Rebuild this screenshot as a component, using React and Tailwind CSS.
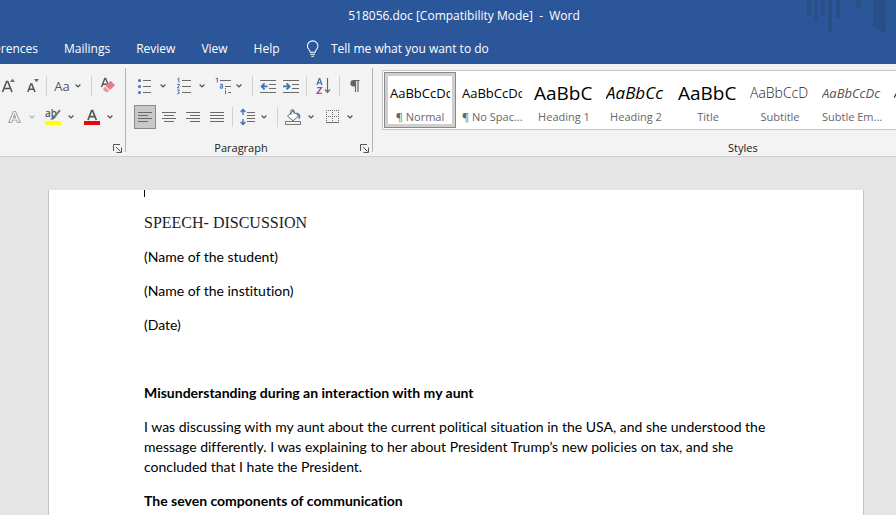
import React from "react";

const line = { stroke: "#6a6a6a", strokeWidth: 1, fill: "none", shapeRendering: "crispEdges" };
const blue = "#3f74ae";

function Icon({ w = 16, label, children }) {
  return (
    <svg width={w} height="20" viewBox={`0 0 ${w} 20`} role="img" aria-label={label} className="shrink-0">
      {children}
    </svg>
  );
}

function Chevron({ faded }) {
  return (
    <svg width="6" height="6" viewBox="0 0 6 6" className="shrink-0" aria-hidden="true">
      <path d="M0.6 1.5 3 3.9 5.4 1.5" fill="none" stroke={faded ? "#b5b5b5" : "#555"} strokeWidth="1.3" />
    </svg>
  );
}

function Tool({ children }) {
  return <button className="flex h-6 shrink-0 items-center">{children}</button>;
}

function DropTool({ children, tight, faded }) {
  return (
    <button className={`flex h-6 shrink-0 items-center ${tight ? "gap-[5px]" : "gap-[7px]"}`}>
      {children}
      <Chevron faded={faded} />
    </button>
  );
}

const Sep = () => <span className="h-5 w-px shrink-0 bg-[#d0d0d0]" />;

const rows = (list) => list.map(([x1, x2, y]) => <path key={y} d={`M${x1} ${y}.5H${x2}`} {...line} />);

function AlignTool({ label, lines, active }) {
  return (
    <button
      aria-pressed={!!active}
      className={`flex h-6 w-[22px] items-center justify-center border ${active ? "border-[#8a8a8a] bg-[#c8c8c8]" : "border-transparent"}`}
    >
      <Icon w={14} label={label}>{rows(lines)}</Icon>
    </button>
  );
}

function Launcher({ label }) {
  return (
    <button aria-label={label} className="flex h-4 w-4 items-center justify-center">
      <svg width="9" height="9" viewBox="0 0 9 9" aria-hidden="true">
        <path d="M0.5 7V0.5H7M3 3 7.5 7.5M8.5 3.5V8.5M3.5 8.5H8.5" fill="none" stroke="#555" />
      </svg>
    </button>
  );
}

function FontGroup() {
  return (
    <section aria-label="Font" className="flex w-[126px] shrink-0 flex-col border-r border-[#b4b4b4] pt-1.5">
      <div className="flex h-6 items-center">
        <Tool>
          <Icon w={18} label="Increase font size">
            <path d="M2.5 16 6.6 5.5h1.2L12 16M4 12.5h6.5" fill="none" stroke="#555" strokeWidth="1.6" />
            <path d="M10 6 12.5 2.8 15 6z" fill={blue} />
          </Icon>
        </Tool>
        <Tool>
          <Icon w={28} label="Decrease font size">
            <path d="M9.8 16 12.8 8h1L17 16M11 13.3h5" fill="none" stroke="#555" strokeWidth="1.5" />
            <path d="M16 3h5l-2.5 3.2z" fill={blue} />
          </Icon>
        </Tool>
        <Sep />
        <div className="flex pr-2.5 pl-[7px]">
          <DropTool tight>
            <span className="w-4 text-[13px] leading-5 text-[#555]">Aa</span>
          </DropTool>
        </div>
        <Sep />
        <div className="flex pl-2">
          <Tool>
            <Icon w={16} label="Clear all formatting">
              <path d="M1.5 11 4.8 2.5h.8L8 8M2.7 8.3h4" fill="none" stroke="#555" strokeWidth="1.4" />
              <path d="M10.6 4.8 15 9.2 10 14 5.5 9.8z" fill="#e8788a" />
              <path d="M4.8 10.5 9.2 14.7 7.8 16H5.6L3 13.2z" fill="#ec93a1" />
            </Icon>
          </Tool>
        </div>
      </div>
      <div className="mt-[7px] flex h-6 items-center gap-2.5 pl-1.5">
        <DropTool faded>
          <Icon label="Text effects">
            <path d="M2.8 15.5 7.4 4.5h2.2l4.600 11h-2.800l-.9-2.500H6.500l-.9 2.500zM7.300 10.800h2.400L8.500 7.500z" fill="#fff" stroke="#a9a9a9" strokeWidth="1.200" />
          </Icon>
        </DropTool>
        <DropTool>
          <Icon label="Text highlight color">
            <text x="0" y="10" fontSize="10" fontFamily="Open Sans" fontWeight="600" fill="#555">ab</text>
            <path d="M15 3.2 9.2 10" stroke="#777" strokeWidth="2" />
            <path d="M8.6 8.8 10.6 10.6 8.2 12.6H5z" fill="#666" />
            <path d="M0 14h16v4H0z" fill="#ffff00" />
          </Icon>
        </DropTool>
        <DropTool>
          <Icon label="Font color">
            <path d="M4 13 7.6 3.5h1L12.3 13M5.3 9.6h5.8" fill="none" stroke="#555" strokeWidth="1.7" />
            <path d="M0 14h16v4H0z" fill="#e00b0b" />
          </Icon>
        </DropTool>
      </div>
      <div className="mt-auto flex h-2 items-center justify-end">
        <Launcher label="Font settings" />
      </div>
    </section>
  );
}

function ParagraphGroup() {
  return (
    <section aria-label="Paragraph" className="flex w-[247px] shrink-0 flex-col border-r border-[#b4b4b4] pt-1.5">
      <div className="flex h-6 items-center gap-2.5 pl-[11px]">
        <DropTool>
          <Icon label="Bullets">
            {rows([[6, 14, 4], [6, 14, 10], [6, 14, 16]])}
            {[4, 10, 16].map((y) => <circle key={y} cx="2.5" cy={y + 0.5} r="1.5" fill={blue} />)}
          </Icon>
        </DropTool>
        <DropTool>
          <Icon label="Numbering">
            {rows([[6, 15, 4], [6, 15, 10], [6, 15, 16]])}
            <path d="M1.5 3 2.8 2v4.5M1.2 8.5h2v1.5l-2 1.8h2.3M1.2 14h2.2L2.3 15.7q1.4.2.8 1.6l-2 .6" fill="none" stroke={blue} />
          </Icon>
        </DropTool>
        <DropTool tight>
          <Icon label="Multilevel list">
            {rows([[5, 16, 4], [10, 16, 10], [13, 16, 16]])}
            <path d="M.8 3 2.3 2v4.5M5 8.3h2.5v3.9H5.3v-2h2M10.5 14.3V18M10.5 12v1.2" fill="none" stroke={blue} />
          </Icon>
        </DropTool>
        <div className="flex items-center gap-[7px]">
          <Sep />
          <Tool>
            <Icon label="Decrease indent">
              {rows([[0, 16, 4], [9, 16, 8], [9, 16, 12], [0, 16, 16]])}
              <path d="M7.5 10.4H2M4.6 7.4l-3 3 3 3" fill="none" stroke={blue} strokeWidth="1.8" />
            </Icon>
          </Tool>
          <Tool>
            <Icon label="Increase indent">
              {rows([[0, 16, 4], [9, 16, 8], [9, 16, 12], [0, 16, 16]])}
              <path d="M0 10.4H6M3.6 7.4l3 3-3 3" fill="none" stroke={blue} strokeWidth="1.8" />
            </Icon>
          </Tool>
          <Sep />
          <Tool>
            <Icon w={18} label="Sort">
              <path d="M3 9 5.2 2.6h.6L8 9M3.8 6.8h3.6" fill="none" stroke={blue} strokeWidth="1.3" />
              <path d="M3.2 11.6h4.3L3.2 17.4h4.6" fill="none" stroke="#8a55a8" strokeWidth="1.4" />
              <path d="M13.5 2v14M11 13.5l2.5 2.8 2.5-2.8" fill="none" stroke="#666" strokeWidth="1.2" />
            </Icon>
          </Tool>
          <Sep />
          <Tool>
            <Icon label="Show paragraph marks">
              <path d="M12.500 4.500H6.600M8.500 4.500V16M11 4.500V16" fill="none" stroke="#666" strokeWidth="1.200" />
              <path d="M8.500 4H6.600a3.200 3.200 0 0 0 0 6.500h1.900z" fill="#666" />
            </Icon>
          </Tool>
        </div>
      </div>
      <div className="mt-[7px] flex h-6 items-center gap-2.5 pl-2">
        <div className="flex items-center gap-1">
          <div className="flex gap-0.5">
            <AlignTool label="Align left" active lines={[[0, 14, 5], [0, 10, 8], [0, 14, 11], [0, 10, 14]]} />
            <AlignTool label="Center" lines={[[0, 14, 5], [2, 12, 8], [0, 14, 11], [2, 12, 14]]} />
            <AlignTool label="Align right" lines={[[0, 14, 5], [4, 14, 8], [0, 14, 11], [4, 14, 14]]} />
            <AlignTool label="Justify" lines={[[0, 14, 5], [0, 14, 8], [0, 14, 11], [0, 14, 14]]} />
          </div>
          <div className="flex items-center gap-[7px]">
            <Sep />
            <DropTool tight>
              <Icon label="Line spacing">
                {rows([[7, 15, 5], [7, 15, 8], [7, 15, 11], [7, 15, 14]])}
                <path d="M3 3v5M3 12v5M.6 5 3 2.6 5.4 5M.6 15 3 17.4 5.4 15" fill="none" stroke={blue} strokeWidth="1.4" />
              </Icon>
            </DropTool>
          </div>
        </div>
        <div className="flex items-center gap-[7px]">
          <Sep />
          <DropTool>
            <Icon label="Shading">
              <path d="M8 4 13.5 9 8 13.8 2.5 9z" fill="#fff" stroke="#666" />
              <path d="M6 8V3h3v4" fill="none" stroke="#666" />
              <path d="M11 5.5q5 .5 4.2 5.5l-1.6 1.6V9z" fill={blue} />
              <path d="M.5 14.5h15v3H.5z" fill="#f5f2ee" stroke="#777" />
            </Icon>
          </DropTool>
        </div>
        <DropTool>
          <Icon label="Borders">
            <path d="M2 3.5h13M2 9.5h13M2.5 3v13M8.5 3v13M14.5 3v13" {...line} strokeDasharray="1 1" />
            <path d="M2 15.5h13" {...line} />
          </Icon>
        </DropTool>
      </div>
      <div className="mt-auto flex h-2 items-center">
        <h2 className="flex-1 text-center text-[11px] leading-4 text-[#222]">Paragraph</h2>
        <Launcher label="Paragraph settings" />
      </div>
    </section>
  );
}

const styles = [
  { name: "¶ Normal", sample: "AaBbCcDc", look: "text-[13px] text-black", active: true },
  { name: "¶ No Spac...", sample: "AaBbCcDc", look: "text-[13px] text-black" },
  { name: "Heading 1", sample: "AaBbC", look: "text-[19px] text-black" },
  { name: "Heading 2", sample: "AaBbCc", look: "text-[17px] italic font-medium text-black" },
  { name: "Title", sample: "AaBbC", look: "text-[19px] text-black" },
  { name: "Subtitle", sample: "AaBbCcD", look: "text-sm font-light text-[#222]" },
  { name: "Subtle Em...", sample: "AaBbCcDc", look: "text-[13px] italic text-[#555]" },
  { name: "Emphasis", sample: "AaBbCcDc", look: "text-[13px] italic text-black" },
];

function StylesGroup() {
  return (
    <section aria-label="Styles" className="flex min-w-0 flex-1 flex-col pt-0.5 pl-[9px]">
      <div className="flex overflow-hidden border border-r-0 border-[#c6c6c6] bg-white p-px">
        {styles.map((s) => (
          <button
            key={s.name}
            aria-pressed={!!s.active}
            className={`flex h-14 w-[72px] shrink-0 flex-col items-stretch border px-[5px] pt-2 ${s.active ? "border-[#8a8a8a] ring-3 ring-[#cfcfcf] ring-inset" : "border-transparent"}`}
          >
            <span className={`h-6 shrink-0 overflow-hidden text-left leading-6 whitespace-nowrap ${s.look}`}>{s.sample}</span>
            <span className="shrink-0 text-center text-[11px] leading-6 whitespace-nowrap text-[#666]">{s.name}</span>
          </button>
        ))}
      </div>
      <div className="mt-auto flex h-2 items-center pl-[346px]">
        <h2 className="text-[11px] leading-4 text-[#222]">Styles</h2>
      </div>
    </section>
  );
}

function TitleBar() {
  return (
    <header className="relative flex h-8 items-center justify-center pl-8">
      <svg width="96" height="34" viewBox="0 0 96 34" className="absolute top-0 right-0" aria-hidden="true">
        <g fill="#284d80" opacity="0.75">
          <path d="M7 0h4v16H7zM14 0h4v22h-4zM21 0h4v16h-4zM28 0h4v32h-4zM36 0h4v18h-4z" />
          <path d="M56 0h5v11l-5-6zM73 0h13v32h-4l-9-7z" />
        </g>
      </svg>
      <h1 className="text-xs leading-4 whitespace-pre">518056.doc [Compatibility Mode]  -  Word</h1>
    </header>
  );
}

function Tabs() {
  return (
    <nav className="flex h-8 items-center gap-[26px] pt-0.5 text-xs leading-4">
      <div className="flex w-[38px] shrink-0 justify-end overflow-hidden">
        <button>References</button>
      </div>
      <button>Mailings</button>
      <button>Review</button>
      <button>View</button>
      <button>Help</button>
      <label className="flex flex-1 items-center gap-3">
        <svg width="14" height="18" viewBox="0 0 14 18" fill="none" stroke="#fff" strokeWidth="1.1" aria-hidden="true">
          <path d="M4.5 12.5C4.5 10 1.5 9 1.5 6a5.5 5.5 0 0 1 11 0c0 3-3 4-3 6.500zM4.500 14.500h5M5.500 16.500h3" />
        </svg>
        <input
          aria-label="Tell me what you want to do"
          placeholder="Tell me what you want to do"
          className="w-full bg-transparent outline-none placeholder:text-white"
        />
      </label>
    </nav>
  );
}

export default function App() {
  return (
    <div className="flex h-screen flex-col overflow-hidden bg-[#e5e5e5] font-['Open_Sans','Noto_Sans',sans-serif]">
      <div className="shrink-0 bg-[#2b579a] text-white">
        <TitleBar />
        <Tabs />
      </div>
      <div className="flex h-[93px] shrink-0 border-b border-[#cfcfcf] bg-[#f3f3f3] pt-1 pb-1">
        <FontGroup />
        <ParagraphGroup />
        <StylesGroup />
      </div>
      <main className="mt-[33px] mr-8 ml-12 flex-1 overflow-hidden border-x border-[#c3c3c3] bg-white px-[95px] font-[Lato,sans-serif] text-sm leading-5 text-black [font-variant-ligatures:none]">
        <div className="mb-4 h-[7px] w-px bg-black" />
        <div className="flex flex-col gap-3.5">
          <p className="font-['Liberation_Serif',serif] text-base leading-5 text-[#222]">SPEECH- DISCUSSION</p>
          <p>(Name of the student)</p>
          <p>(Name of the institution)</p>
          <p>(Date)</p>
          <p className="h-5" />
          <h3 className="font-bold">Misunderstanding during an interaction with my aunt</h3>
          <p>
            I was discussing with my aunt about the current political situation in the USA, and she understood the
            message differently. I was explaining to her about President Trump’s new policies on tax, and she
            concluded that I hate the President.
          </p>
          <h3 className="font-bold">The seven components of communication</h3>
        </div>
      </main>
    </div>
  );
}
